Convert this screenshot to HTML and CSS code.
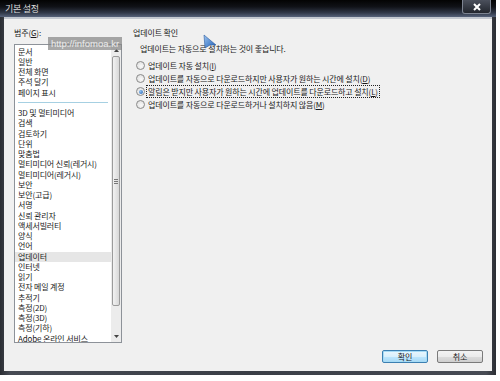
FILE: index.html
```html
<!DOCTYPE html>
<html>
<head>
    <title>기본 설정</title>
    <link rel="stylesheet" href="styles.css">
</head>
<body>
    <div class="window">
        <div class="titlebar">
            <span class="title">기본 설정</span>
            <div class="close">
                <svg width="10" height="8" viewBox="0 0 10 8"><path d="M2 1 L8 7 M8 1 L2 7" stroke="#fff" stroke-width="2"/></svg>
            </div>
        </div>
        <div class="client">
            <div class="main">
                <div class="cat">
                    <div class="label">범주(<u>G</u>):</div>
                    <div class="listbox">
                        <div class="list">
                            <div class="item">문서</div>
                            <div class="item">일반</div>
                            <div class="item">전체 화면</div>
                            <div class="item">주석 달기</div>
                            <div class="item">페이지 표시</div>
                            <div class="sep"></div>
                            <div class="item">3D 및 멀티미디어</div>
                            <div class="item">검색</div>
                            <div class="item">검토하기</div>
                            <div class="item">단위</div>
                            <div class="item">맞춤법</div>
                            <div class="item">멀티미디어 신뢰(레거시)</div>
                            <div class="item">멀티미디어(레거시)</div>
                            <div class="item">보안</div>
                            <div class="item">보안(고급)</div>
                            <div class="item">서명</div>
                            <div class="item">신뢰 관리자</div>
                            <div class="item">액세서빌러티</div>
                            <div class="item">양식</div>
                            <div class="item">언어</div>
                            <div class="item selected">업데이터</div>
                            <div class="item">인터넷</div>
                            <div class="item">읽기</div>
                            <div class="item">전자 메일 계정</div>
                            <div class="item">추적기</div>
                            <div class="item">측정(2D)</div>
                            <div class="item">측정(3D)</div>
                            <div class="item">측정(기하)</div>
                            <div class="item">Adobe 온라인 서비스</div>
                        </div>
                        <div class="scrollbar">
                            <div class="arrow">
                                <svg width="5" height="3" viewBox="0 0 5 3"><path d="M0 3 L2.5 0 L5 3 Z" fill="#444"/></svg>
                            </div>
                            <div class="thumb"><span class="grip"></span></div>
                            <div class="track"></div>
                            <div class="arrow">
                                <svg width="5" height="3" viewBox="0 0 5 3"><path d="M0 0 L2.5 3 L5 0 Z" fill="#444"/></svg>
                            </div>
                        </div>
                    </div>
                </div>
                <div class="pane">
                    <div class="heading">업데이트 확인</div>
                    <div class="note">업데이트는 자동으로 설치하는 것이 좋습니다.</div>
                    <label class="option"><input type="radio" name="upd"><span>업데이트 자동 설치(<u>I</u>)</span></label>
                    <label class="option"><input type="radio" name="upd"><span>업데이트를 자동으로 다운로드하지만 사용자가 원하는 시간에 설치(<u>D</u>)</span></label>
                    <label class="option"><input type="radio" name="upd" checked><span class="focus">알림은 받지만 사용자가 원하는 시간에 업데이트를 다운로드하고 설치(<u>L</u>)</span></label>
                    <label class="option"><input type="radio" name="upd"><span>업데이트를 자동으로 다운로드하거나 설치하지 않음(<u>M</u>)</span></label>
                </div>
            </div>
            <div class="buttons">
                <button class="btn default">확인</button>
                <button class="btn">취소</button>
            </div>
        </div>
    </div>

    <div class="watermark">http://infomoa.kr</div>
    <svg class="cursor" width="14" height="15" viewBox="0 0 14 15">
        <defs>
            <linearGradient id="cg" x1="0" y1="0" x2="1" y2="1">
                <stop offset="0" stop-color="#9cc4f0"/>
                <stop offset="1" stop-color="#1f5fb8"/>
            </linearGradient>
        </defs>
        <path d="M1 1 L13 11 L7 11 L2 14 Z" fill="url(#cg)" stroke="#2a5aa0" stroke-width="0.6"/>
    </svg>
</body>
</html>
```

FILE: styles.css
```css
body {
    margin: 0;
    background: #fff;
    font-family: "Noto Sans CJK KR", "Noto Sans", sans-serif;
    font-size: 8px;
    letter-spacing: -0.15px;
    color: #1a1a1a;
    position: relative;
    width: 500px;
    height: 381px;
    overflow: hidden;
}

.window {
    width: 496px;
    height: 375px;
    display: flex;
    flex-direction: column;
    background: linear-gradient(90deg, #2a2d33, #474b54 2%, #3a3e46 50%, #474b54 98%, #2a2d33);
}

.titlebar {
    height: 17px;
    display: flex;
    justify-content: space-between;
    align-items: flex-start;
    background: linear-gradient(#030303 0%, #101217 40%, #303848 75%, #56627a 100%);
    padding-left: 5px;
}

.title {
    color: #dcdcdc;
    font-size: 9px;
    letter-spacing: -0.3px;
    line-height: 17px;
}

.close {
    width: 27px;
    height: 13px;
    margin-right: 5px;
    display: flex;
    align-items: center;
    justify-content: center;
    background: linear-gradient(#4b505c, #22262e);
    border: 1px solid #7d8492;
    border-top: none;
    border-radius: 0 0 3px 3px;
}

.client {
    flex: 1;
    margin: 0 4px 4px;
    background: #f0f0f0;
    border-top: 2px solid #c3c8d0;
    display: flex;
    flex-direction: column;
}

.main {
    display: flex;
    padding: 9px 0 0 10px;
}

.cat {
    width: 108px;
}

.label,
.heading,
.note {
    line-height: 10px;
}

.listbox {
    margin-top: 6px;
    height: 299px;
    box-sizing: border-box;
    border: 1px solid #8d9299;
    background: #fff;
    display: flex;
}

.list {
    flex: 1;
    overflow: hidden;
    padding-top: 1.5px;
}

.item {
    line-height: 10.25px;
    height: 10.25px;
    padding-left: 3px;
    white-space: nowrap;
}

.item.selected {
    background: #e6e6e6;
}

.sep {
    height: 10.25px;
    display: flex;
    align-items: center;
    padding: 0 3px;
}

.sep::after {
    content: "";
    flex: 1;
    height: 1px;
    background: #a6d0e2;
}

.scrollbar {
    width: 10px;
    display: flex;
    flex-direction: column;
    background: #ececec;
}

.arrow {
    height: 11px;
    display: flex;
    align-items: center;
    justify-content: center;
}

.thumb {
    height: 248px;
    margin: 0 1px;
    border: 1px solid #9b9b9b;
    border-radius: 2px;
    background: linear-gradient(90deg, #f2f2f2, #d8d8d8);
    display: flex;
    align-items: center;
    justify-content: center;
}

.grip {
    width: 4px;
    height: 5px;
    background: repeating-linear-gradient(#777 0 1px, transparent 1px 2px);
}

.track {
    flex: 1;
}

.pane {
    margin-left: 11px;
}

.note {
    margin: 6px 0 0 7px;
}

.option {
    display: flex;
    align-items: center;
    height: 13px;
}

.note + .option {
    margin-top: 5px;
}

.option input {
    appearance: none;
    width: 9px;
    height: 9px;
    margin: 0 2px 0 3px;
    border: 1px solid #8a8a8a;
    border-radius: 50%;
    background: radial-gradient(circle at 60% 60%, #fafafa, #d9d9d9);
    box-sizing: border-box;
    display: flex;
    align-items: center;
    justify-content: center;
}

.option input:checked::after {
    content: "";
    width: 4px;
    height: 4px;
    border-radius: 50%;
    background: radial-gradient(circle at 35% 35%, #8ec0f0, #1d5fb5);
}

.option span {
    line-height: 11px;
    padding: 0 1px;
    white-space: nowrap;
}

.focus {
    outline: 1px dotted #222;
}

.buttons {
    margin-top: auto;
    display: flex;
    justify-content: flex-end;
    gap: 9px;
    padding: 0 9px 8px 0;
}

.btn {
    width: 46px;
    height: 13px;
    padding: 0;
    font-family: inherit;
    font-size: 8px;
    letter-spacing: -0.15px;
    line-height: 11px;
    color: #1a1a1a;
    border: 1px solid #7a7a7a;
    border-radius: 2px;
    background: linear-gradient(#f3f3f3 0%, #ebebeb 50%, #dcdcdc 51%, #cfcfcf 100%);
}

.btn.default {
    border-color: #3c7fb1;
    box-shadow: inset 0 0 0 1px #a6dbf5;
    background: linear-gradient(#eaf6fd 0%, #d9f0fc 50%, #bee6fd 51%, #a7d9f5 100%);
}

.watermark {
    position: absolute;
    left: 48px;
    top: 37px;
    width: 74px;
    height: 13px;
    background: rgba(135, 135, 135, 0.72);
    color: #ececec;
    font-family: "Liberation Sans", sans-serif;
    font-size: 9.5px;
    letter-spacing: 0;
    line-height: 13px;
    text-align: center;
}

.cursor {
    position: absolute;
    left: 203px;
    top: 34px;
}
```
